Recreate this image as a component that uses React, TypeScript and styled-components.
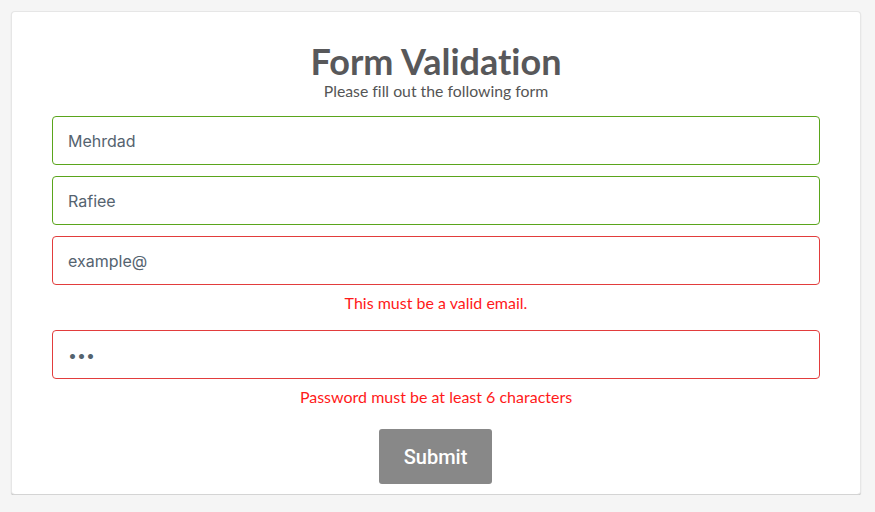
import React from "react";
import styled, { createGlobalStyle } from "styled-components";

const Global = createGlobalStyle`
  html, body { margin: 0; padding: 0; background: #f5f5f5; }
  body { font-family: Lato, "Open Sans", sans-serif; font-variant-ligatures: none; }
  * { box-sizing: border-box; }
`;

const Page = styled.div`
  padding: 11px 14px 0 11px;
`;

const Card = styled.div`
  background: #fff;
  border: 1px solid #e6e6e6;
  border-bottom-color: #d4d4d4;
  border-radius: 4px;
  box-shadow: 0 1px 1px rgba(0, 0, 0, 0.2);
  padding: 30px 40px 10px;
  display: flex;
  flex-direction: column;
  align-items: stretch;
`;

const Header = styled.div`
  display: flex;
  flex-direction: column;
  align-items: center;
  margin-bottom: 16px;
`;

const Title = styled.h1`
  margin: 0;
  font-family: Lato, sans-serif;
  font-weight: 700;
  font-size: 36px;
  line-height: 38px;
  color: #58585a;
  font-variant-ligatures: none;
`;

const Subtitle = styled.p`
  margin: 2px 0 0;
  font-family: Lato, sans-serif;
  font-size: 15.8px;
  line-height: 18px;
  color: #555;
  font-variant-ligatures: none;
`;

const Form = styled.form`
  display: flex;
  flex-direction: column;
  gap: 11px;
`;

const Field = styled.div`
  display: flex;
  flex-direction: column;
`;

const Input = styled.input<{ $valid: boolean }>`
  height: 49px;
  width: 100%;
  padding: 0 15px;
  border: 1px solid ${(p) => (p.$valid ? "#5aa51c" : "#e23d3d")};
  border-radius: 4px;
  font-family: Inter, sans-serif;
  font-size: 16px;
  color: #55636f;
  background: #fff;
  outline: none;
`;

const Error = styled.div`
  margin: 9px 0 7px;
  text-align: center;
  font-family: Lato, sans-serif;
  font-size: 16px;
  line-height: 18px;
  color: #ff1a1a;
`;

const ButtonRow = styled.div`
  display: flex;
  justify-content: center;
  margin-top: 5px;
`;

const SubmitButton = styled.button`
  width: 113px;
  height: 55px;
  margin-right: 1px;
  border: none;
  border-radius: 3px;
  background: #888888;
  color: #fff;
  font-family: Roboto, "Liberation Sans", Arial, sans-serif;
  font-size: 20px;
  font-weight: 500;
  cursor: pointer;
`;

export default function App() {
  return (
    <Page>
      <Global />
      <Card>
        <Header>
          <Title>Form Validation</Title>
          <Subtitle>Please fill out the following form</Subtitle>
        </Header>
        <Form onSubmit={(e) => e.preventDefault()}>
          <Field>
            <Input $valid type="text" defaultValue="Mehrdad" />
          </Field>
          <Field>
            <Input $valid type="text" defaultValue="Rafiee" />
          </Field>
          <Field>
            <Input $valid={false} type="text" defaultValue="example@" />
            <Error>This must be a valid email.</Error>
          </Field>
          <Field>
            <Input $valid={false} type="password" defaultValue="abc" />
            <Error>Password must be at least 6 characters</Error>
          </Field>
          <ButtonRow>
            <SubmitButton type="submit">Submit</SubmitButton>
          </ButtonRow>
        </Form>
      </Card>
    </Page>
  );
}
